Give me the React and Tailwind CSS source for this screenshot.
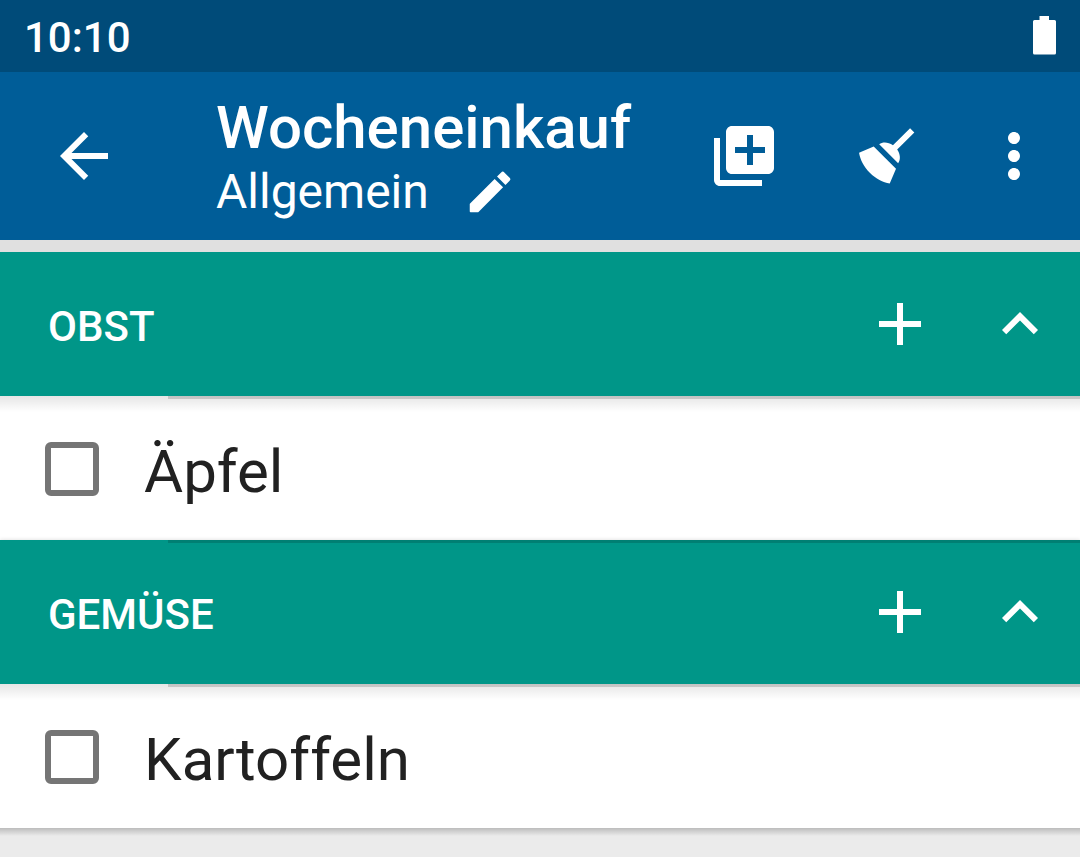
import React, { useState } from 'react';

const initialSections = [
  { id: 'obst', title: 'OBST', items: [{ id: 'aepfel', label: 'Äpfel' }] },
  { id: 'gemuese', title: 'GEMÜSE', items: [{ id: 'kartoffeln', label: 'Kartoffeln' }] },
];

// Material icon paths, all on a 24x24 grid
const icons = {
  back: 'M20 11H7.83l5.59-5.59L12 4l-8 8 8 8 1.41-1.41L7.83 13H20v-2z',
  edit: 'M3 17.46v3.04c0 .28.22.5.5.5h3.04c.13 0 .26-.05.35-.15L17.81 9.94l-3.75-3.75L3.15 17.1c-.1.1-.15.22-.15.36zM20.71 7.04a1 1 0 0 0 0-1.41l-2.34-2.34a1 1 0 0 0-1.41 0l-1.83 1.83 3.75 3.75 1.83-1.83z',
  addList: 'M4 6H2v14c0 1.1.9 2 2 2h14v-2H4V6zm16-4H8c-1.1 0-2 .9-2 2v12c0 1.1.9 2 2 2h12c1.1 0 2-.9 2-2V4c0-1.1-.9-2-2-2zm-1 9h-4v4h-2v-4H9V9h4V5h2v4h4v2z',
  broom: 'M19.36 2.72l1.42 1.42-5.72 5.71c1.07 1.54 1.22 3.39.32 4.59L9.06 8.12c1.2-.9 3.05-.75 4.59.32l5.71-5.72M5.93 17.57c-2.01-2.01-3.24-4.41-3.58-6.65l4.88-2.09 7.44 7.44-2.09 4.88c-2.24-.34-4.64-1.57-6.65-3.58z',
  more: 'M12 8c1.1 0 2-.9 2-2s-.9-2-2-2-2 .9-2 2 .9 2 2 2zm0 2c-1.1 0-2 .9-2 2s.9 2 2 2 2-.9 2-2-.9-2-2-2zm0 6c-1.1 0-2 .9-2 2s.9 2 2 2 2-.9 2-2-.9-2-2-2z',
  plus: 'M19 13h-6v6h-2v-6H5v-2h6V5h2v6h6v2z',
  up: 'M12 8l-6 6 1.41 1.41L12 10.83l4.59 4.58L18 14z',
  down: 'M16.59 8.59L12 13.17 7.41 8.59 6 10l6 6 6-6z',
};

function Icon({ path, className = 'size-18' }) {
  return (
    <svg viewBox="0 0 24 24" className={className} fill="currentColor" aria-hidden="true">
      <path d={path} />
    </svg>
  );
}

function StatusBar() {
  return (
    <div className="flex h-18 items-center justify-between bg-[#004b79] px-6 text-white">
      <span className="pt-1 text-[42px] leading-12 font-medium">10:10</span>
      <svg viewBox="0 0 24 40" className="h-10 w-6" fill="currentColor" role="img" aria-label="Akku">
        <path d="M7.500 0h9.500v4h5.500a1.500 1.500 0 0 1 1.500 1.500v31.500a1.500 1.500 0 0 1-1.500 1.500h-20a1.500 1.500 0 0 1-1.500-1.500V5.500A1.500 1.500 0 0 1 2.500 4h5z" />
      </svg>
    </div>
  );
}

function AppBar() {
  return (
    <header className="flex h-42 items-center bg-[#005d98] pr-3 text-white">
      <button aria-label="Zurück" className="flex w-42 shrink-0 justify-center">
        <Icon path={icons.back} />
      </button>
      <div className="ml-12 min-w-0 flex-1">
        <h1 className="truncate text-[60px] leading-18 font-medium">Wocheneinkauf</h1>
        <div className="flex items-center gap-[34px]">
          <span className="text-5xl leading-14">Allgemein</span>
          <button aria-label="Bearbeiten">
            <Icon path={icons.edit} className="size-[54px]" />
          </button>
        </div>
      </div>
      <button aria-label="Liste hinzufügen" className="flex w-36 shrink-0 justify-center">
        <Icon path={icons.addList} />
      </button>
      <button aria-label="Aufräumen" className="flex w-36 shrink-0 justify-center">
        <Icon path={icons.broom} />
      </button>
      <button aria-label="Mehr" className="flex w-27 shrink-0 justify-center">
        <Icon path={icons.more} />
      </button>
    </header>
  );
}

function Divider() {
  return <div className="absolute top-0 right-0 left-42 h-[3px] bg-black/15" />;
}

function Item({ item }) {
  const [checked, setChecked] = useState(false);

  return (
    <li className="relative bg-white">
      {/* soft shadow that the section header casts on the row */}
      <div className="absolute inset-x-0 top-0 h-4 bg-linear-to-b from-black/10 to-transparent" />
      <Divider />
      <label className="flex h-36 items-center gap-[45px] pt-0.5 pl-[45px]">
        <input
          type="checkbox"
          checked={checked}
          onChange={() => setChecked(!checked)}
          className="size-[54px] shrink-0 appearance-none rounded-md border-6 border-[#757575] checked:border-[#009688] checked:bg-[#009688]"
        />
        <span className="pt-1.5 text-[60px] leading-18 text-[#212121]">{item.label}</span>
      </label>
    </li>
  );
}

function Section({ section, first }) {
  const [open, setOpen] = useState(true);

  return (
    <section>
      <div className="relative flex h-36 items-center bg-[#009688] pl-12 text-white shadow-[0_0_4px_rgba(0,0,0,0.15)]">
        {!first && <Divider />}
        <h2 className="flex-1 pt-1.5 text-[42px] leading-12 font-medium">{section.title}</h2>
        <button aria-label={section.title + ' hinzufügen'} className="flex w-30 justify-center">
          <Icon path={icons.plus} />
        </button>
        <button
          aria-label={open ? 'Einklappen' : 'Ausklappen'}
          aria-expanded={open}
          onClick={() => setOpen(!open)}
          className="flex w-30 justify-center"
        >
          <Icon path={open ? icons.up : icons.down} />
        </button>
      </div>
      {open && (
        <ul>
          {section.items.map((item) => (
            <Item key={item.id} item={item} />
          ))}
        </ul>
      )}
    </section>
  );
}

export default function App() {
  return (
    <div className="min-h-screen bg-[#ebebeb] font-[Roboto,sans-serif]">
      <StatusBar />
      <AppBar />
      <main>
        <div className="relative z-10 h-3 bg-[#e0e0e0]" />
        {initialSections.map((section, index) => (
          <Section key={section.id} section={section} first={index === 0} />
        ))}
        {/* shadow below the end of the list */}
        <div className="h-2 bg-linear-to-b from-black/20 to-transparent" />
      </main>
    </div>
  );
}
